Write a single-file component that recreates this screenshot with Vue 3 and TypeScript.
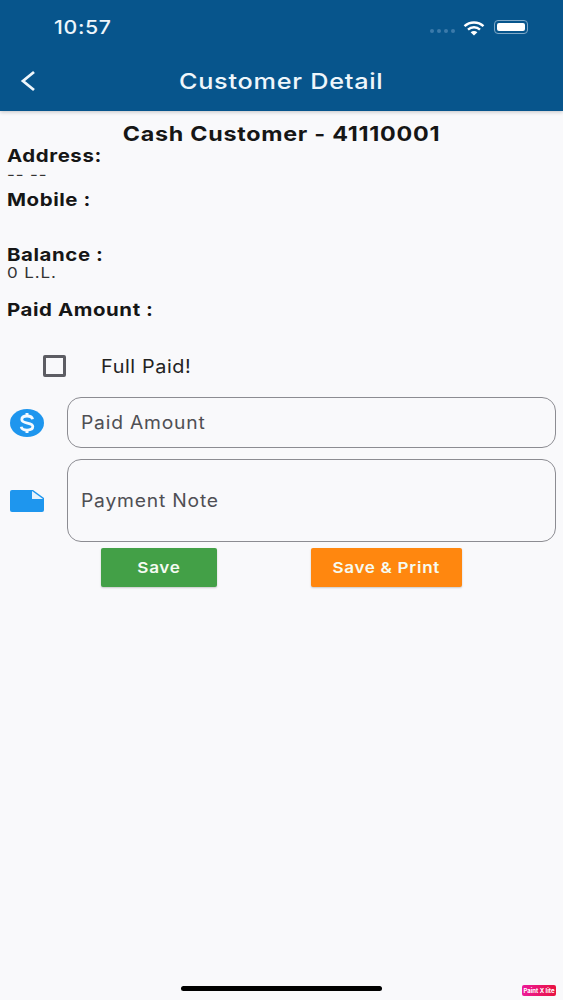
<template>
  <div class="screen">
    <header class="app-bar">
      <div class="status">
        <span class="status__time">10:57</span>
        <div class="status__icons">
          <span class="signal"><i v-for="n in 4" :key="n" /></span>
          <svg class="wifi" width="22" height="16" viewBox="0 0 22 16">
            <path d="M1.5 6.2C6.8 1.2 15.2 1.2 20.5 6.2" fill="none" stroke="#fff" stroke-width="2.4" />
            <path d="M5 9.6C8.4 6.5 13.6 6.5 17 9.6" fill="none" stroke="#fff" stroke-width="2.4" />
            <path d="M7.6 12.2 11 15.6 14.4 12.2C12.4 10.6 9.6 10.6 7.6 12.2Z" fill="#fff" />
          </svg>
          <span class="battery"><i /></span>
        </div>
      </div>
      <div class="nav">
        <svg class="nav__back" width="18" height="22" viewBox="0 0 18 22">
          <path d="M15 2 4 11 15 20" fill="none" stroke="#eef6fb" stroke-width="2.8" />
        </svg>
        <h1 class="nav__title">Customer Detail</h1>
      </div>
    </header>

    <main class="content">
      <h2 class="name">Cash Customer - 41110001</h2>
      <div class="label label--address">Address:</div>
      <div class="value value--address">-- --</div>
      <div class="label label--mobile">Mobile :</div>
      <div class="label label--balance">Balance :</div>
      <div class="value value--balance">0 L.L.</div>
      <div class="label label--paid">Paid Amount :</div>

      <label class="check">
        <span class="check__box" />
        <span class="check__text">Full Paid!</span>
      </label>

      <div class="field">
        <svg class="field__icon" width="34" height="28" viewBox="0 0 34 28">
          <ellipse cx="17" cy="14" rx="17" ry="14" fill="#1e96ee" />
          <path d="M22.6 10.2C22.2 8.2 20 7 17 7 13.8 7 11.8 8.4 11.8 10.6 11.8 15.6 22.8 12.6 22.8 17.6 22.8 19.8 20.4 21.1 17 21.1 13.8 21.1 11.6 19.8 11.2 17.8" fill="none" stroke="#f4faff" stroke-width="2.8" />
          <path d="M17 4V7M17 21V24" fill="none" stroke="#f4faff" stroke-width="3" />
        </svg>
        <div class="field__box"><span class="field__text">Paid Amount</span></div>
      </div>
      <div class="field field--note">
        <svg class="field__icon" width="34" height="22" viewBox="0 0 34 22">
          <path d="M2 0H23L34 8V20A2 2 0 0 1 32 22H2A2 2 0 0 1 0 20V2A2 2 0 0 1 2 0Z" fill="#1e96ee" />
          <path d="M22 1 33 9H22Z" fill="#e4f2fd" />
        </svg>
        <div class="field__box field__box--note"><span class="field__text">Payment Note</span></div>
      </div>

      <div class="actions">
        <button type="button" class="btn btn--save"><span>Save</span></button>
        <button type="button" class="btn btn--print"><span>Save &amp; Print</span></button>
      </div>
    </main>

    <div class="home-bar" />
    <div class="watermark">Paint X lite</div>
  </div>
</template>

<script setup lang="ts">
</script>

<style>
html,body{margin:0;background:#f9f9fb}
</style>

<style scoped>
.screen{position:relative;display:flex;flex-direction:column;width:563px;height:1000px;overflow:hidden;background:#f9f9fb;font-family:Inter,"Liberation Sans",sans-serif;color:#161616}
.app-bar{height:111px;flex:none;background:#07558c;box-shadow:0 1px 4px rgba(0,0,0,.22);color:#eef6fb}
.status{display:flex;align-items:center;justify-content:space-between;height:54px;padding:0 35px 0 54px;box-sizing:border-box}
.status__time{font-size:19px;font-weight:500;letter-spacing:.6px;transform:scaleX(1.12);transform-origin:left}
.status__icons{display:flex;align-items:center;gap:9px}
.wifi{margin-top:2px}
.signal{display:flex;gap:3px;margin:8px -1px 0 0}
.signal i{width:4px;height:4px;border-radius:50%;background:#3b7aab}
.battery{display:block;width:34px;height:14px;padding:2px;box-sizing:border-box;border:1px solid #7fa8c7;border-radius:4px}
.battery i{display:block;height:100%;border-radius:2px;background:#fff}
.nav{position:relative;display:flex;align-items:center;justify-content:center;height:54px}
.nav__back{position:absolute;left:19px;top:16px}
.nav__title{margin:0;font-size:22px;font-weight:500;letter-spacing:.65px;transform:scaleX(1.147)}
.content{display:flex;flex-direction:column;padding:0 7px}
.name{margin:12px 0 0;height:22px;font-size:20px;line-height:22px;font-weight:700;letter-spacing:.62px;text-align:center;transform:scaleX(1.165)}
.label{font-size:18px;line-height:22px;font-weight:700;letter-spacing:.5px;transform:scaleX(1.135);transform-origin:left}
.value{font-size:15px;line-height:16px;letter-spacing:.8px;color:#333;transform:scaleX(1.13);transform-origin:left}
.label--address{margin-top:0}
.value--address{margin-top:0}
.label--mobile{margin-top:6px}
.label--balance{margin-top:33px}
.value--balance{margin-top:-1px}
.label--paid{margin-top:18px}
.check{display:flex;align-items:center;height:34px;margin-top:28px;padding-left:36px}
.check__box{width:17px;height:16px;border:3px solid #5d5d63;border-radius:2px}
.check__text{margin-left:35px;font-size:18px;letter-spacing:.55px;color:#222;transform:scaleX(1.1);transform-origin:left}
.field{display:flex;align-items:center;gap:23px;margin-top:14px;padding-left:3px}
.field--note{margin-top:11px}
.field__icon{flex:none}
.field__box{display:flex;align-items:center;flex:1;height:51px;padding-left:13px;box-sizing:border-box;border:1px solid #8c8c92;border-radius:14px;font-size:18px;letter-spacing:.75px;color:#4f4f54}
.field__box--note{height:83px}
.field__text{transform:scaleX(1.07);transform-origin:left}
.actions{display:flex;margin-top:6px;padding-left:94px;gap:94px}
.btn{height:39px;border:0;border-radius:2px;color:#f5fbf2;font:600 15px Inter,"Liberation Sans",sans-serif;letter-spacing:.6px;box-shadow:0 1px 2px rgba(0,0,0,.2)}
.btn span{display:inline-block;transform:scaleX(1.14)}
.btn--save{width:116px;background:#43a047}
.btn--print{width:151px;background:#ff870f}
.home-bar{position:absolute;left:181px;top:986px;width:201px;height:5px;border-radius:3px;background:#000}
.watermark{position:absolute;left:522px;top:985px;width:34px;height:11px;border-radius:2px;background:linear-gradient(90deg,#ec1a9a,#e8123f);color:#fff;font-size:6px;font-weight:700;line-height:11px;text-align:center;white-space:nowrap}
</style>
